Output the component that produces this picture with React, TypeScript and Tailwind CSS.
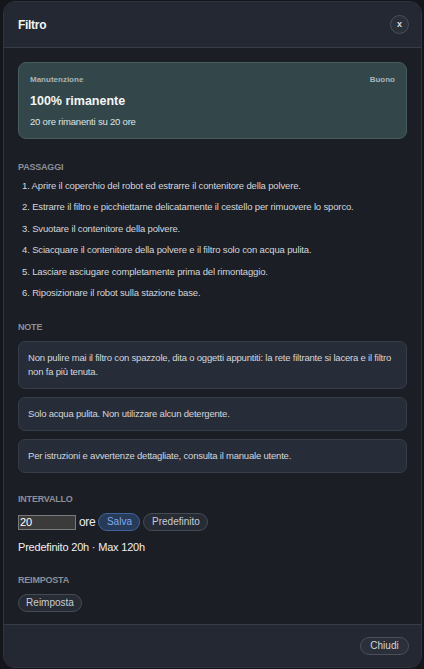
const STEPS = [
  "Aprire il coperchio del robot ed estrarre il contenitore della polvere.",
  "Estrarre il filtro e picchiettarne delicatamente il cestello per rimuovere lo sporco.",
  "Svuotare il contenitore della polvere.",
  "Sciacquare il contenitore della polvere e il filtro solo con acqua pulita.",
  "Lasciare asciugare completamente prima del rimontaggio.",
  "Riposizionare il robot sulla stazione base.",
];

const NOTES = [
  "Non pulire mai il filtro con spazzole, dita o oggetti appuntiti: la rete filtrante si lacera e il filtro non fa più tenuta.",
  "Solo acqua pulita. Non utilizzare alcun detergente.",
  "Per istruzioni e avvertenze dettagliate, consulta il manuale utente.",
];

function Label({ children }: { children: React.ReactNode }) {
  return (
    <div className="text-[9px] font-bold uppercase leading-[12px] tracking-[-0.2px] text-[#8b9099]">
      {children}
    </div>
  );
}

function Pill({ children, className = "" }: { children: React.ReactNode; className?: string }) {
  return (
    <button
      className={`flex h-[18px] items-center justify-center rounded-full border text-[10px] leading-none ${className}`}
    >
      {children}
    </button>
  );
}

export default function App() {
  return (
    <div
      className="h-[669px] w-[424px] bg-[#14161b] px-[3px] pt-px"
      style={{ fontFamily: '"Liberation Sans", Arial, sans-serif' }}
    >
      <div className="flex h-[667px] w-[419px] flex-col overflow-hidden rounded-[12px] border border-[#2e333d] bg-[#1b1e25]">
        <div className="flex h-[46px] shrink-0 items-center justify-between border-b border-[#363c48] bg-[#232832] pl-[14px] pr-[12px]">
          <h1 className="text-[12px] font-bold tracking-[-0.3px] text-[#f1f3f5]">Filtro</h1>
          <button className="flex h-[19px] w-[19px] items-center justify-center rounded-full border border-[#4a505b] bg-[#2a2f39] text-[9px] font-bold leading-none text-[#d6d9de]">
            x
          </button>
        </div>

        <div className="flex flex-1 flex-col px-[14px] pt-[14px]">
          <div className="flex h-[77px] flex-col rounded-[8px] border border-[#465c5f] bg-[#33464a] px-[11px] pt-[11px]">
            <div className="flex items-center justify-between text-[8px] font-bold leading-[12px] text-[#a9b4b6]">
              <span>Manutenzione</span>
              <span>Buono</span>
            </div>
            <div className="mt-[6px] text-[12.5px] font-bold leading-[18px] text-[#f4f6f7]">100% rimanente</div>
            <div className="mt-[5px] text-[9.5px] leading-[14px] tracking-[-0.2px] text-[#dfe4e5]">
              20 ore rimanenti su 20 ore
            </div>
          </div>

          <div className="mt-[22px]">
            <Label>Passaggi</Label>
          </div>
          <ol className="mt-[2px] flex flex-col pl-[4px] text-[9.5px] tracking-[-0.15px] text-[#d3d6db]">
            {STEPS.map((s, i) => (
              <li key={i} className="flex h-[21.5px] items-center">
                {i + 1}. {s}
              </li>
            ))}
          </ol>

          <div className="mt-[17px]">
            <Label>Note</Label>
          </div>
          <div className="mt-[8px] flex flex-col gap-[8px]">
            {NOTES.map((n, i) => (
              <div
                key={i}
                className="rounded-[7px] border border-[#363d49] bg-[#272d38] px-[9px] py-[9px] text-[9.5px] leading-[14px] tracking-[-0.2px] text-[#d3d6db]"
              >
                {n}
              </div>
            ))}
          </div>

          <div className="mt-[20px]">
            <Label>Intervallo</Label>
          </div>
          <div className="mt-[8px] flex items-center">
            <input
              defaultValue="20"
              className="h-[15px] w-[58px] border border-[#7a7a7a] bg-[#3b3b3b] px-px text-[11px] leading-none text-white outline-none"
            />
            <span className="ml-[3px] mr-[3px] text-[12px] tracking-[-0.3px] text-[#e9ecef]">ore</span>
            <Pill className="w-[42px] border-[#3e64a0] bg-[#273a57] text-[#80aaf0]">Salva</Pill>
            <Pill className="ml-[3px] w-[65px] border-[#454b56] bg-[#262b34] text-[#c9cdd3]">Predefinito</Pill>
          </div>
          <div className="mt-[9px] text-[11px] leading-[14px] tracking-[-0.2px] text-[#eef0f2]">
            Predefinito 20h · Max 120h
          </div>

          <div className="mt-[20px]">
            <Label>Reimposta</Label>
          </div>
          <div className="mt-[8px] flex">
            <Pill className="w-[64px] border-[#454b56] bg-[#262b34] text-[#c9cdd3]">Reimposta</Pill>
          </div>
        </div>

        <div className="flex h-[43px] shrink-0 items-center justify-end border-t border-[#363c48] bg-[#232832] pr-[12px]">
          <Pill className="h-[17px] w-[49px] border-[#4a505b] bg-[#2a2f39] text-[#d1d5db]">Chiudi</Pill>
        </div>
      </div>
    </div>
  );
}
